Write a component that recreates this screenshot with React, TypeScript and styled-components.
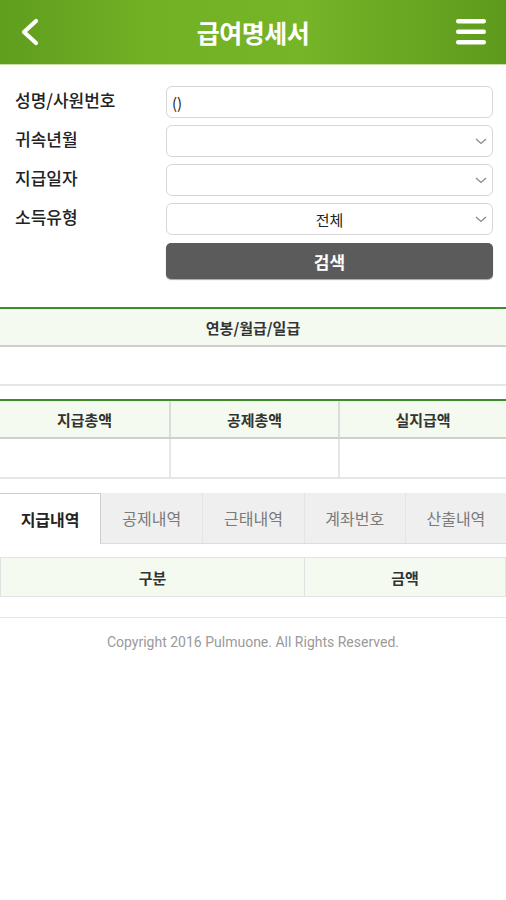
import React from "react";
import styled, { createGlobalStyle } from "styled-components";

const Global = createGlobalStyle`
  html, body { margin: 0; padding: 0; background: #fff; }
  body { font-family: "Noto Sans CJK KR", "Noto Sans", sans-serif; width: 506px; }
  * { box-sizing: border-box; }
`;

const Page = styled.div`
  width: 506px;
  min-height: 900px;
  background: #fff;
  display: flex;
  flex-direction: column;
`;

const Header = styled.header`
  height: 65px;
  background: linear-gradient(90deg, #5f9e1e 0%, #72b024 30%, #76b428 60%, #5d9a1c 100%);
  border-bottom: 1px solid #c7e0a8;
  display: grid;
  grid-template-columns: 60px 1fr 60px;
  align-items: center;
`;

const Title = styled.h1`
  margin: 0;
  text-align: center;
  color: #fff;
  font-size: 25px;
  font-weight: 700;
  letter-spacing: -0.5px;
`;

const IconBtn = styled.div<{ $align: "start" | "end" }>`
  display: flex;
  justify-content: ${(p) => (p.$align === "start" ? "flex-start" : "flex-end")};
  padding: ${(p) => (p.$align === "start" ? "0 0 0 19px" : "0 20px 0 0")};
  align-items: center;
`;

const Form = styled.div`
  padding: 21px 13px 0 15px;
  display: flex;
  flex-direction: column;
  gap: 7px;
`;

const Row = styled.div`
  display: grid;
  grid-template-columns: 151px 1fr;
  align-items: center;
`;

const Label = styled.div`
  font-size: 17px;
  font-weight: 500;
  color: #222;
  margin-top: -6px;
`;

const Field = styled.div<{ $center?: boolean }>`
  position: relative;
  height: 32px;
  border: 1px solid #d6d6d6;
  border-radius: 6px;
  background: #fff;
  display: flex;
  align-items: center;
  justify-content: ${(p) => (p.$center ? "center" : "flex-start")};
  padding: 0 5px;
  font-size: 15px;
  color: #222;
`;

const Chevron = styled.svg`
  position: absolute;
  right: 5px;
  top: 50%;
  margin-top: -3px;
`;

const SearchBtn = styled.button`
  height: 36px;
  border: none;
  border-radius: 5px;
  background: #5b5b5b;
  box-shadow: 0 1px 1px rgba(0, 0, 0, 0.35);
  color: #fff;
  font-family: inherit;
  font-size: 17px;
  font-weight: 700;
  margin-top: 1px;
`;

const Section = styled.div<{ $mt: number }>`
  margin-top: ${(p) => p.$mt}px;
  border-top: 2px solid #3c8c2c;
`;

const HeadRow = styled.div<{ $cols: string }>`
  display: grid;
  grid-template-columns: ${(p) => p.$cols};
  background: #f4faf0;
  border-bottom: 2px solid #cfcfcf;
  height: 38px;
`;

const HeadCell = styled.div<{ $divider?: boolean }>`
  display: flex;
  align-items: center;
  justify-content: center;
  font-size: 15px;
  font-weight: 700;
  color: #333;
  border-left: ${(p) => (p.$divider ? "2px solid #dcdcdc" : "none")};
`;

const BodyRow = styled.div<{ $cols: string; $h: number }>`
  display: grid;
  grid-template-columns: ${(p) => p.$cols};
  height: ${(p) => p.$h}px;
  border-bottom: 2px solid #e6e6e6;
`;

const BodyCell = styled.div<{ $divider?: boolean }>`
  border-left: ${(p) => (p.$divider ? "2px solid #e6e6e6" : "none")};
`;

const Tabs = styled.div`
  margin-top: 14px;
  display: grid;
  grid-template-columns: repeat(5, 1fr);
  height: 51px;
  background: #efefef;
  border-bottom: 1px solid #dcdcdc;
`;

const Tab = styled.div<{ $active?: boolean }>`
  display: flex;
  align-items: center;
  justify-content: center;
  font-size: 16px;
  font-weight: ${(p) => (p.$active ? 700 : 400)};
  color: ${(p) => (p.$active ? "#222" : "#7a7a7a")};
  background: ${(p) => (p.$active ? "#fff" : "transparent")};
  border: ${(p) => (p.$active ? "1px solid #cfcfcf" : "none")};
  border-bottom: ${(p) => (p.$active ? "none" : "0")};
  margin-bottom: ${(p) => (p.$active ? "-1px" : "0")};
  border-left: ${(p) => (p.$active ? "none" : "1px solid #e4e4e4")};
  &:first-child { border-left: none; }
  &:nth-child(2) { border-left: none; }
`;

const DetailTable = styled.div`
  margin-top: 13px;
  display: grid;
  grid-template-columns: 303px 1fr;
  height: 40px;
  background: #f4faf0;
  border: 1px solid #e2e2e2;
`;

const DetailCell = styled.div<{ $divider?: boolean }>`
  display: flex;
  align-items: center;
  justify-content: center;
  font-size: 15px;
  font-weight: 700;
  color: #333;
  border-left: ${(p) => (p.$divider ? "1px solid #e2e2e2" : "none")};
`;

const Footer = styled.footer`
  margin-top: 20px;
  border-top: 1px solid #e8e8e8;
  padding-top: 16px;
  text-align: center;
  font-family: Roboto, "Noto Sans", sans-serif;
  font-size: 14px;
  color: #9a9a9a;
`;

const ChevronDown = () => (
  <Chevron width="12" height="7" viewBox="0 0 12 7">
    <path d="M1 1 L6 5.5 L11 1" fill="none" stroke="#8a8a8a" strokeWidth="1.3" />
  </Chevron>
);

export default function App() {
  return (
    <Page>
      <Global />
      <Header>
        <IconBtn $align="start">
          <svg width="22" height="28" viewBox="0 0 22 28">
            <path d="M17 3 L5 14 L17 25" fill="none" stroke="#fff" strokeWidth="4.2" strokeLinecap="round" strokeLinejoin="round" />
          </svg>
        </IconBtn>
        <Title>급여명세서</Title>
        <IconBtn $align="end">
          <svg width="30" height="28" viewBox="0 0 30 28">
            <rect x="0" y="1" width="30" height="4.5" rx="2.2" fill="#fff" />
            <rect x="0" y="11.5" width="30" height="4.5" rx="2.2" fill="#fff" />
            <rect x="0" y="22" width="30" height="4.5" rx="2.2" fill="#fff" />
          </svg>
        </IconBtn>
      </Header>

      <Form>
        <Row>
          <Label>성명/사원번호</Label>
          <Field>()</Field>
        </Row>
        <Row>
          <Label>귀속년월</Label>
          <Field>
            <ChevronDown />
          </Field>
        </Row>
        <Row>
          <Label>지급일자</Label>
          <Field>
            <ChevronDown />
          </Field>
        </Row>
        <Row>
          <Label>소득유형</Label>
          <Field $center>
            전체
            <ChevronDown />
          </Field>
        </Row>
        <Row>
          <div />
          <SearchBtn>검색</SearchBtn>
        </Row>
      </Form>

      <Section $mt={28}>
        <HeadRow $cols="1fr">
          <HeadCell>연봉/월급/일급</HeadCell>
        </HeadRow>
        <BodyRow $cols="1fr" $h={39}>
          <BodyCell />
        </BodyRow>
      </Section>

      <Section $mt={13}>
        <HeadRow $cols="169px 169px 1fr">
          <HeadCell>지급총액</HeadCell>
          <HeadCell $divider>공제총액</HeadCell>
          <HeadCell $divider>실지급액</HeadCell>
        </HeadRow>
        <BodyRow $cols="169px 169px 1fr" $h={40}>
          <BodyCell />
          <BodyCell $divider />
          <BodyCell $divider />
        </BodyRow>
      </Section>

      <Tabs>
        <Tab $active>지급내역</Tab>
        <Tab>공제내역</Tab>
        <Tab>근태내역</Tab>
        <Tab>계좌번호</Tab>
        <Tab>산출내역</Tab>
      </Tabs>

      <DetailTable>
        <DetailCell>구분</DetailCell>
        <DetailCell $divider>금액</DetailCell>
      </DetailTable>

      <Footer>Copyright 2016 Pulmuone. All Rights Reserved.</Footer>
    </Page>
  );
}
